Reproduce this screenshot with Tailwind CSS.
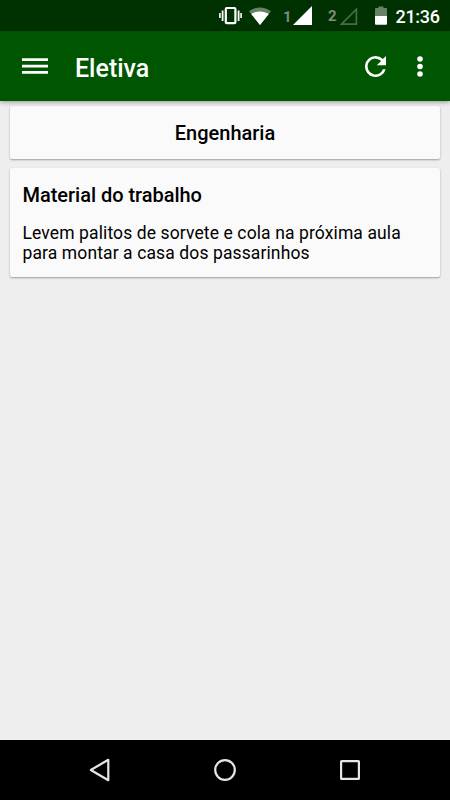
<!DOCTYPE html>
<html lang="pt-BR">
<head>
<meta charset="utf-8">
<title>Eletiva</title>
<script src="https://cdn.jsdelivr.net/npm/@tailwindcss/browser@4"></script>
</head>
<body class="flex h-[800px] w-[450px] flex-col overflow-hidden bg-[#eeeeee] font-[Roboto,sans-serif] text-black">
  <div class="flex h-[31px] shrink-0 items-center bg-[#003100] pl-[219px] text-white">
    <svg class="h-[31px] w-[23px] shrink-0" viewBox="0 0 23 31" fill="none" stroke="#fff">
      <rect x="6.8" y="8" width="9.6" height="15.2" rx="1" stroke-width="2.2"/>
      <path d="M3.6 10.5v10.5M19.6 10.5v10.5" stroke-width="1.8"/><path d="M.9 13v5M22.1 13v5" stroke-width="1.6"/>
    </svg>
    <svg class="ml-[7px] h-[31px] w-[22px] shrink-0" viewBox="0 0 22 31">
      <path d="M0 11.3C6.5 6.2 15.5 6.2 22 11.3L11 25Z" fill="#668366"/>
      <path d="M2.2 14C7.5 10.6 14.5 10.6 19.8 14L11 25Z" fill="#fff"/>
    </svg>
    <span class="relative top-[1.5px] ml-3 w-[10px] text-[15px] font-bold leading-none text-[#7f8b7f]">1</span>
    <svg class="h-[31px] w-[19px] shrink-0" viewBox="0 0 19 31"><path d="M0 25L19 6V25Z" fill="#fff"/></svg>
    <span class="relative top-[1px] ml-4 w-[12px] text-[15px] font-bold leading-none text-[#7f8b7f]">2</span>
    <svg class="h-[31px] w-[18px] shrink-0" viewBox="0 0 18 31"><path d="M1.6 24.2L16.4 9.2V24.2Z" fill="none" stroke="#4a6b4a" stroke-width="1.7"/></svg>
    <svg class="ml-[17px] h-[31px] w-3 shrink-0" viewBox="0 0 12 31">
      <path d="M0 9Q0 8 1 8H3.5V6.4H8.5V8H11Q12 8 12 9V16H0Z" fill="#668366"/>
      <path d="M0 16H12V23.8Q12 24.8 11 24.8H1Q0 24.8 0 23.8Z" fill="#fff"/>
    </svg>
    <span class="relative top-[1px] ml-[8.5px] text-[18px] font-medium leading-none tracking-[-0.3px]">21:36</span>
  </div>
  <header class="z-10 flex h-[70px] shrink-0 items-center bg-[#005500] pl-[22px] text-white shadow-[0_1px_5px_rgba(0,0,0,0.4)]">
    <svg class="h-[18px] w-[26px]" viewBox="0 0 26 18" fill="#fff"><path d="M0 1.2h26v2.7H0zM0 7.7h26v2.7H0zM0 14h26v2.7H0z"/></svg>
    <h1 class="relative top-[2px] ml-[27px] w-[289.5px] text-[25px] font-medium leading-none">Eletiva</h1>
    <svg class="h-[21px] w-[21px]" viewBox="4 4 16 16" fill="#fff"><path d="M17.65 6.35A7.96 7.96 0 0 0 12 4a8 8 0 1 0 7.73 10h-2.08A6 6 0 1 1 12 6c1.66 0 3.14.69 4.22 1.78L13 11h7V4z"/></svg>
    <svg class="ml-[31.5px] h-[21px] w-[6px]" viewBox="0 0 6 21" fill="#fff"><circle cx="3" cy="3" r="2.8"/><circle cx="3" cy="10.5" r="2.8"/><circle cx="3" cy="18" r="2.8"/></svg>
  </header>
  <main class="flex flex-1 flex-col gap-[9px] px-[10px] pt-[5px]">
    <section class="flex h-[53px] items-center justify-center rounded-[2px] bg-[#fafafa] shadow-[0_1px_2px_rgba(0,0,0,0.34)]">
      <h2 class="text-[20px] font-medium leading-6">Engenharia</h2>
    </section>
    <section class="h-[109px] rounded-[2px] bg-[#fafafa] px-[12.5px] pt-[15px] shadow-[0_1px_2px_rgba(0,0,0,0.34)]">
      <h2 class="text-[20px] font-medium leading-6 tracking-[-0.03px]">Material do trabalho</h2>
      <p class="mt-[16px] text-[17.5px] leading-5 tracking-[0.11px]">Levem palitos de sorvete e cola na próxima aula<br>para montar a casa dos passarinhos</p>
    </section>
  </main>
  <nav class="flex h-[60px] shrink-0 items-center bg-black pl-[89px]">
    <svg class="h-6 w-[21px]" viewBox="0 0 21 24" fill="none" stroke="#e6e6e6" stroke-width="2.2" stroke-linejoin="round"><path d="M1.8 12L19.3 1.8V22.2Z"/></svg>
    <svg class="ml-[104px] h-[22px] w-[22px]" viewBox="0 0 22 22" fill="none" stroke="#e6e6e6" stroke-width="2.2"><circle cx="11" cy="11" r="9.8"/></svg>
    <svg class="ml-[104px] h-5 w-5" viewBox="0 0 20 20" fill="none" stroke="#e6e6e6" stroke-width="2.2"><rect x="1.1" y="1.1" width="17.8" height="17.8" rx=".5"/></svg>
  </nav>
</body>
</html>
